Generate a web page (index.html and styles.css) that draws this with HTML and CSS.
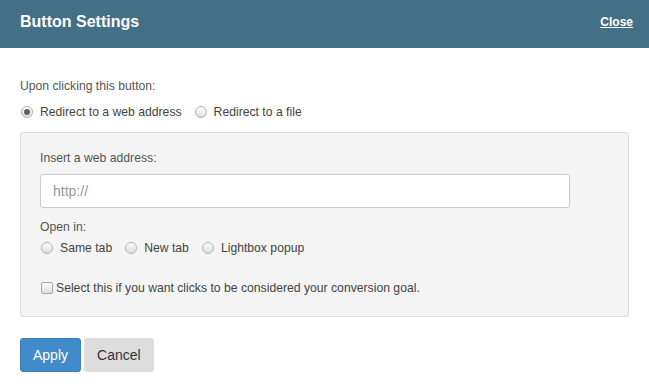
FILE: index.html
```html
<!DOCTYPE html>
<html>
<head>
<meta charset="utf-8">
<link rel="stylesheet" href="styles.css">
</head>
<body>
<div class="dialog">
  <header class="header">
    <h1 class="title">Button Settings</h1>
    <a class="close" href="#">Close</a>
  </header>
  <div class="body">
    <div class="label intro">Upon clicking this button:</div>
    <div class="options top-options">
      <label class="opt"><span class="radio checked"></span>Redirect to a web address</label>
      <label class="opt"><span class="radio"></span>Redirect to a file</label>
    </div>
    <div class="panel">
      <div class="label">Insert a web address:</div>
      <div class="input">http://</div>
      <div class="label open-label">Open in:</div>
      <div class="options">
        <label class="opt"><span class="radio"></span>Same tab</label>
        <label class="opt"><span class="radio"></span>New tab</label>
        <label class="opt"><span class="radio"></span>Lightbox popup</label>
      </div>
      <label class="check-row"><span class="checkbox"></span>Select this if you want clicks to be considered your conversion goal.</label>
    </div>
    <div class="buttons">
      <button class="btn btn-primary">Apply</button>
      <button class="btn btn-default">Cancel</button>
    </div>
  </div>
</div>
</body>
</html>
```
FILE: styles.css
```css
* { box-sizing: border-box; }
html, body { margin: 0; padding: 0; background: #fff; }
body {
  font-family: "Liberation Sans", Arial, sans-serif;
  font-size: 12.2px;
  color: #555;
  width: 649px;
  height: 389px;
  overflow: hidden;
}
.header {
  height: 48px;
  background: #436f87;
  display: flex;
  align-items: center;
  justify-content: space-between;
  padding: 0 16px 0 20px;
}
.title {
  margin: 0;
  color: #fff;
  font-size: 16px;
  font-weight: bold;
  line-height: 20px;
  padding-bottom: 4px;
}
.close {
  color: #fff;
  font-size: 12px;
  font-weight: bold;
  text-decoration: underline;
  line-height: 16px;
  padding-bottom: 4px;
}
.body {
  padding: 30px 20px 0 20px;
}
.label {
  line-height: 16px;
  color: #555;
}
.options {
  display: flex;
  gap: 12px;
  line-height: 16px;
  color: #444;
}
.top-options { margin-top: 10px; }
.opt {
  display: flex;
  align-items: center;
}
.radio {
  width: 12px;
  height: 12px;
  border-radius: 50%;
  border: 1px solid #b4b4b4;
  background: linear-gradient(#fdfdfd, #dedede);
  margin-right: 7px;
  margin-left: 1px;
  display: flex;
  align-items: center;
  justify-content: center;
}
.radio.checked::after {
  content: "";
  width: 6px;
  height: 6px;
  border-radius: 50%;
  background: #606060;
}
.panel {
  margin-top: 12px;
  background: #f4f4f4;
  border: 1px solid #dddddd;
  border-radius: 3px;
  padding: 17px 20px 20px 19px;
  display: flex;
  flex-direction: column;
}
.input {
  margin-top: 8px;
  width: 530px;
  height: 34px;
  background: #fff;
  border: 1px solid #cccccc;
  border-radius: 3px;
  padding: 0 12px;
  display: flex;
  align-items: center;
  font-size: 14px;
  color: #999;
}
.open-label { margin-top: 11px; }
.panel .options { margin-top: 5px; }
.check-row {
  margin-top: 24px;
  display: flex;
  align-items: center;
  line-height: 16px;
  color: #444;
}
.checkbox {
  width: 12px;
  height: 12px;
  border: 1px solid #a8a8a8;
  border-radius: 2px;
  background: linear-gradient(#fdfdfd, #dedede);
  margin-left: 1px;
  margin-right: 3px;
}
.buttons {
  margin-top: 21px;
  display: flex;
  gap: 3px;
}
.btn {
  font-family: "Liberation Sans", Arial, sans-serif;
  font-size: 14px;
  height: 34px;
  padding: 0 12px;
  border-radius: 3px;
  border: 1px solid transparent;
  cursor: pointer;
}
.btn-primary {
  background: #428bca;
  border-color: #357ebd;
  color: #fff;
}
.btn-default {
  background: #dddddd;
  border-color: #dddddd;
  color: #333;
}
```
